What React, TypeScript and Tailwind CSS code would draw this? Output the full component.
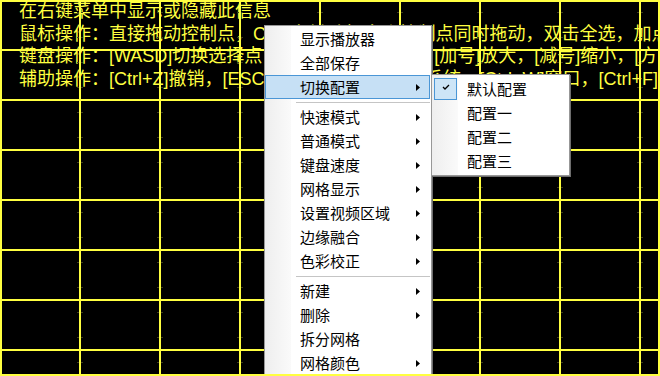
const YELLOW = '#ffff40';

const infoLines = [
  '在右键菜单中显示或隐藏此信息',
  '鼠标操作：直接拖动控制点，Ctrl+左键选择多个控制点同时拖动，双击全选，加点删点右键操作',
  '键盘操作：[WASD]切换选择点，[方向键]微调位置，[加号]放大，[减号]缩小，[方向键]移动',
  '辅助操作：[Ctrl+Z]撤销，[ESC]退出， [Ctrl+S]保存系统，[Ctrl+W]窗口，[Ctrl+F]全屏',
];

type Entry = { label: string; arrow?: boolean; active?: boolean } | 'sep';

const menuEntries: Entry[] = [
  { label: '显示播放器' },
  { label: '全部保存' },
  { label: '切换配置', arrow: true, active: true },
  'sep',
  { label: '快速模式', arrow: true },
  { label: '普通模式', arrow: true },
  { label: '键盘速度', arrow: true },
  { label: '网格显示', arrow: true },
  { label: '设置视频区域', arrow: true },
  { label: '边缘融合', arrow: true },
  { label: '色彩校正', arrow: true },
  'sep',
  { label: '新建', arrow: true },
  { label: '删除', arrow: true },
  { label: '拆分网格' },
  { label: '网格颜色', arrow: true },
];

const configs = ['默认配置', '配置一', '配置二', '配置三'];

function GridLines() {
  const xs = [80, 160, 240, 320, 400, 480, 560, 640];
  const ys = [50, 100, 150, 200, 250, 300, 350];
  const ticks: number[] = [];
  for (let y = 0; y < 376; y += 50) ticks.push(y + 12.5, y + 37.5);
  return (
    <svg className="absolute inset-0" width={660} height={376}>
      {xs.map((x) =>
        ticks.map((t) => (
          <line key={`t${x}-${t}`} x1={x - 3} x2={x + 3} y1={t} y2={t} stroke="#3e3e1c" strokeWidth={1} />
        )),
      )}
      {xs.map((x) => (
        <line key={`x${x}`} x1={x} x2={x} y1={0} y2={376} stroke={YELLOW} strokeWidth={2} />
      ))}
      {ys.map((y) => (
        <line key={`y${y}`} x1={0} x2={660} y1={y} y2={y} stroke={YELLOW} strokeWidth={2} />
      ))}
      <rect x={1} y={1} width={658} height={374} fill="none" stroke={YELLOW} strokeWidth={2} />
    </svg>
  );
}

function Arrow() {
  return (
    <svg width={4} height={7} viewBox="0 0 4 7">
      <polygon points="0,0 4,3.5 0,7" fill="#000" />
    </svg>
  );
}

function ContextMenu() {
  return (
    <div className="absolute left-[264px] top-[25px] w-[168px] border border-[#979797] bg-white pt-[1px] shadow-[1px_1px_0_#6e6e6e] font-['Noto_Sans_CJK_SC',sans-serif] text-[15px] text-black">
      <div className="absolute left-0 top-0 bottom-0 w-[26px] bg-gradient-to-r from-[#eeeeee] to-[#fafafa]" />
      {menuEntries.map((e, i) =>
        e === 'sep' ? (
          <div key={i} className="relative flex h-[6px] items-center pl-[31px] pr-[1px]">
            <div className="h-px w-full bg-[#c5c5c5]" />
          </div>
        ) : (
          <div
            key={i}
            className={`relative mr-[1px] flex h-[24px] items-center justify-between leading-[24px] ${
              e.active ? 'border border-[#4a96d6] bg-[#c6e0f5] pl-[34px] pr-[9px]' : 'pl-[35px] pr-[10px]'
            }`}
          >
            <span>{e.label}</span>
            {e.arrow && <Arrow />}
          </div>
        ),
      )}
    </div>
  );
}

function SubMenu() {
  return (
    <div className="absolute left-[431px] top-[74px] w-[139px] border border-[#979797] bg-white py-[2px] shadow-[1px_1px_0_#6e6e6e] font-['Noto_Sans_CJK_SC',sans-serif] text-[15px] text-black">
      <div className="absolute left-0 top-0 bottom-0 w-[26px] bg-gradient-to-r from-[#eeeeee] to-[#fafafa]" />
      {configs.map((c, i) => (
        <div key={c} className="relative flex h-[24px] items-center pl-[35px] leading-[24px]">
          {i === 0 && (
            <div className="absolute left-[2px] top-[1px] flex h-[22px] w-[23px] items-center justify-center border border-[#4a96d6] bg-[#cde5f7] pb-[4px]">
              <svg width={8} height={6} viewBox="0 0 8 6">
                <path d="M1 3 L3 5 L7 1" fill="none" stroke="#000" strokeWidth={1.3} />
              </svg>
            </div>
          )}
          <span>{c}</span>
        </div>
      ))}
    </div>
  );
}

export default function App() {
  return (
    <div className="relative h-[376px] w-[660px] overflow-hidden bg-black">
      <div className="relative pl-[19px] font-['Liberation_Sans','Noto_Sans_CJK_SC',sans-serif] text-[18px] leading-[22.6px] text-[#ffff40] whitespace-pre">
        {infoLines.map((l) => (
          <div key={l}>{l}</div>
        ))}
      </div>
      <GridLines />
      <ContextMenu />
      <SubMenu />
      <div className="absolute bottom-0 left-0 right-0 h-[2px] bg-[#ffff40]" />
    </div>
  );
}
